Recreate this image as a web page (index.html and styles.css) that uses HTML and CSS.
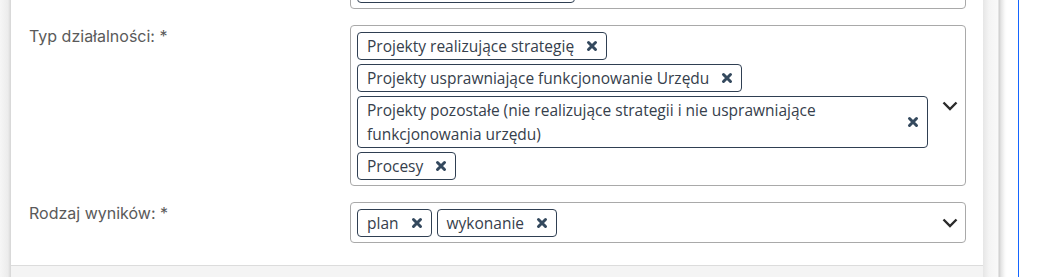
FILE: index.html
```html
<!DOCTYPE html>
<html lang="pl">
<head>
  <meta charset="UTF-8" />
  <meta name="viewport" content="width=device-width, initial-scale=1.0" />
  <title>Formularz</title>
  <link rel="stylesheet" href="styles.css">
</head>
<body>
  <div class="layout">
    <div class="edge-left"></div>

    <div class="panel">
      <div class="form">
        <!-- poprzednie pole, widoczne tylko dolna krawedz -->
        <div class="row">
          <div class="label"></div>
          <div class="select">
            <div class="tags">
              <span class="tag tag-hidden"></span>
            </div>
          </div>
        </div>

        <div class="row">
          <label class="label">Typ działalności: *</label>
          <div class="select">
            <div class="tags">
              <span class="tag"><span class="tag-text">Projekty realizujące strategię</span><svg class="tag-x" viewBox="0 0 12 12"><path d="M2.5 2.5 L9.5 9.5 M9.5 2.5 L2.5 9.5"/></svg></span>
              <span class="tag"><span class="tag-text">Projekty usprawniające funkcjonowanie Urzędu</span><svg class="tag-x" viewBox="0 0 12 12"><path d="M2.5 2.5 L9.5 9.5 M9.5 2.5 L2.5 9.5"/></svg></span>
              <span class="tag tag-wide"><span class="tag-text">Projekty pozostałe (nie realizujące strategii i nie usprawniające funkcjonowania urzędu)</span><svg class="tag-x" viewBox="0 0 12 12"><path d="M2.5 2.5 L9.5 9.5 M9.5 2.5 L2.5 9.5"/></svg></span>
              <span class="tag"><span class="tag-text">Procesy</span><svg class="tag-x" viewBox="0 0 12 12"><path d="M2.5 2.5 L9.5 9.5 M9.5 2.5 L2.5 9.5"/></svg></span>
            </div>
            <svg class="chevron" viewBox="0 0 16 10"><path d="M1.5 1.5 L8 8 L14.5 1.5"/></svg>
          </div>
        </div>

        <div class="row">
          <label class="label">Rodzaj wyników: *</label>
          <div class="select">
            <div class="tags tags-inline">
              <span class="tag"><span class="tag-text">plan</span><svg class="tag-x" viewBox="0 0 12 12"><path d="M2.5 2.5 L9.5 9.5 M9.5 2.5 L2.5 9.5"/></svg></span>
              <span class="tag"><span class="tag-text">wykonanie</span><svg class="tag-x" viewBox="0 0 12 12"><path d="M2.5 2.5 L9.5 9.5 M9.5 2.5 L2.5 9.5"/></svg></span>
            </div>
            <svg class="chevron" viewBox="0 0 16 10"><path d="M1.5 1.5 L8 8 L14.5 1.5"/></svg>
          </div>
        </div>
      </div>

      <div class="panel-footer"></div>
    </div>

    <div class="edge-right"></div>
    <div class="blue-line"></div>
    <div class="rest"></div>
  </div>
</body>
</html>
```

FILE: styles.css
```css
body {
  margin: 0;
  height: 277px;
  overflow: hidden;
  background-color: #fff;
  font-family: "Open Sans", "Noto Sans", sans-serif;
}

.layout {
  display: flex;
  height: 277px;
}

.edge-left {
  width: 11px;
  flex-shrink: 0;
  background: linear-gradient(to right, #f6f6f6 0, #ececec 8px, #dcdcdc 10px, #d6d6d6 11px);
}

.panel {
  width: 972px;
  flex-shrink: 0;
  display: flex;
  flex-direction: column;
  background-color: #fff;
  overflow: hidden;
}

.form {
  flex: 1;
  display: flex;
  flex-direction: column;
  gap: 16px;
  margin-top: -32px;
  padding: 0 17px 0 18px;
}

.row {
  display: flex;
}

.label {
  width: 321px;
  flex-shrink: 0;
  padding-top: 1px;
  font-family: Inter, "Noto Sans", sans-serif;
  font-size: 16px;
  line-height: 20px;
  color: #5a5a5a;
}

.select {
  flex: 1;
  display: flex;
  align-items: center;
  border: 1px solid #a9a9a9;
  border-radius: 4px;
  padding: 6px 7px 5px 6px;
}

.tags {
  width: 571px;
  display: flex;
  flex-direction: column;
  align-items: flex-start;
  gap: 4px;
}

.tags-inline {
  flex-direction: row;
  gap: 5px;
}

.tag {
  display: flex;
  align-items: center;
  border: 1px solid #2f3f52;
  border-radius: 4px;
  padding: 1px 8px 1px 9px;
  font-size: 15.5px;
  line-height: 24px;
  color: #36404c;
}

.tag-wide {
  align-self: stretch;
}

.tag-hidden {
  width: 199px;
  height: 24px;
}

.tag-text {
  flex: 1;
}

.tag-x {
  width: 12px;
  height: 12px;
  margin-left: 12px;
  flex-shrink: 0;
}

.tag-x path {
  stroke: #34495e;
  stroke-width: 3;
  stroke-linecap: round;
  fill: none;
}

.chevron {
  width: 16px;
  height: 10px;
  margin-left: auto;
}

.chevron path {
  stroke: #2b2b2b;
  stroke-width: 2.4;
  fill: none;
}

.panel-footer {
  height: 11px;
  border-top: 1px solid #dcdcdc;
  background-color: #f4f4f4;
}

.edge-right {
  width: 35px;
  flex-shrink: 0;
  background: linear-gradient(to right, #e6e6e6 0, #f4f4f4 6px, #f9f9f9 15px, #cdcdcd 16px, #e4e4e4 18px, #fbfbfb 22px, #fff 24px);
}

.blue-line {
  width: 1px;
  flex-shrink: 0;
  background-color: #1565ff;
}

.rest {
  flex: 1;
  background-color: #fff;
}
```
